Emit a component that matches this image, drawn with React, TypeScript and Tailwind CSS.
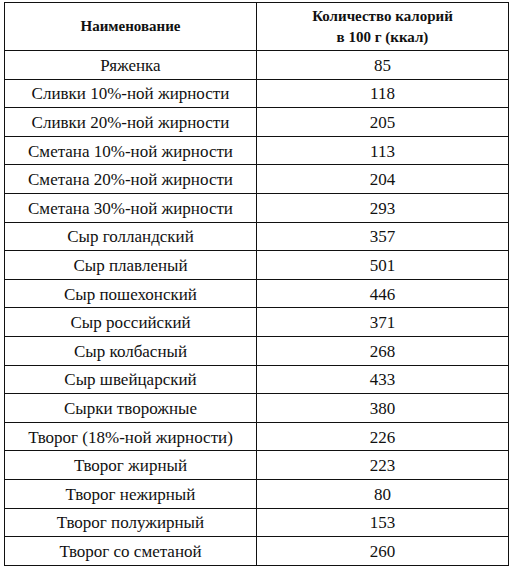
const rows: [string, string][] = [
  ["Ряженка", "85"],
  ["Сливки 10%-ной жирности", "118"],
  ["Сливки 20%-ной жирности", "205"],
  ["Сметана 10%-ной жирности", "113"],
  ["Сметана 20%-ной жирности", "204"],
  ["Сметана 30%-ной жирности", "293"],
  ["Сыр голландский", "357"],
  ["Сыр плавленый", "501"],
  ["Сыр пошехонский", "446"],
  ["Сыр российский", "371"],
  ["Сыр колбасный", "268"],
  ["Сыр швейцарский", "433"],
  ["Сырки творожные", "380"],
  ["Творог (18%-ной жирности)", "226"],
  ["Творог жирный", "223"],
  ["Творог нежирный", "80"],
  ["Творог полужирный", "153"],
  ["Творог со сметаной", "260"],
];

export default function App() {
  return (
    <div className="h-[570px] w-[513px] bg-white pl-[4px] pt-[2px] [font-family:'Liberation_Serif',serif] text-[#111]">
      <table className="w-[505px] table-fixed border-collapse">
        <thead>
          <tr className="h-[48px] text-[15px] font-bold leading-[21px]">
            <th className="w-[252px] border border-[#111] p-0">Наименование</th>
            <th className="border border-[#111] p-0">
              Количество калорий
              <br />в 100 г (ккал)
            </th>
          </tr>
        </thead>
        <tbody className="text-[17px] leading-[20px]">
          {rows.map(([name, kcal]) => (
            <tr key={name} className="h-[28.6px]">
              <td className="border border-[#111] p-0 pt-[2px] text-center">{name}</td>
              <td className="border border-[#111] p-0 pt-[2px] text-center">{kcal}</td>
            </tr>
          ))}
        </tbody>
      </table>
    </div>
  );
}
